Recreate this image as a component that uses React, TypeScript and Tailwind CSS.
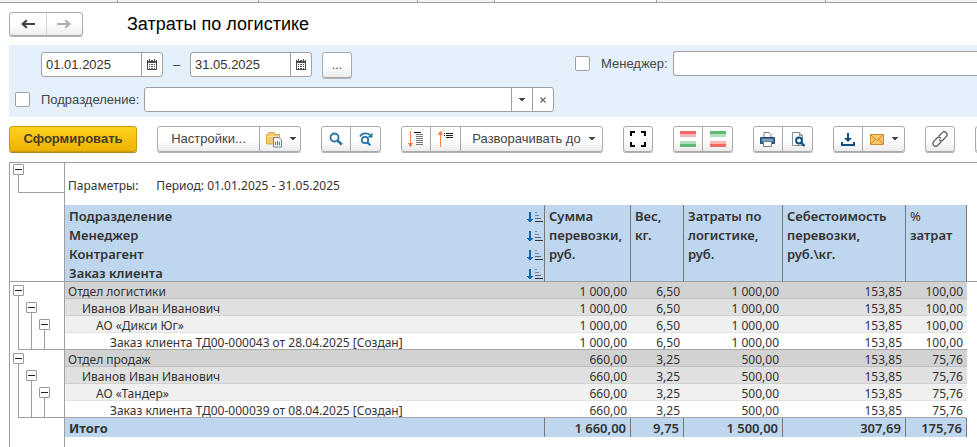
import React from "react";

const sans = "font-['Liberation_Sans',Arial,sans-serif]";
const face = "border border-[#a9a9a9] bg-linear-to-b from-white from-50% to-[#ececec] shadow-[0_1px_0_#b4b4b4]";

function Caret() {
  return (
    <svg width="6" height="4" viewBox="0 0 6 4" shapeRendering="crispEdges" className="shrink-0">
      <path d="M0 0h6v1H5v1H4v1H2V2H1V1H0z" fill="#444" />
    </svg>
  );
}

function CalendarIcon() {
  return (
    <svg width="10" height="11" viewBox="0 0 10 11" shapeRendering="crispEdges">
      <path d="M0 1h10v10H0z" fill="#4a4a4a" />
      <path d="M2 0h1v2H2zM7 0h1v2H7z" fill="#4a4a4a" />
      <path d="M1 1h1v1H1zM3 1h1v1H3zM6 1h1v1H6zM8 1h1v1H8zM1 4h8v6H1z" fill="#fff" />
      <path d="M2 5h1v1H2zM4 5h2v1H4zM7 5h1v1H7zM2 7h1v1H2zM4 7h2v1H4zM7 7h1v1H7zM2 9h1v1H2zM4 9h2v1H4zM7 9h1v1H7z" fill="#4a4a4a" />
    </svg>
  );
}

function NavArrow({ flip, color }: { flip?: boolean; color: string }) {
  return (
    <svg width="14" height="10" viewBox="0 0 14 10" className={flip ? "-scale-x-100" : ""}>
      <path d="M0 5 5 0.5 6.5 2 4.5 4H14v2H4.5l2 2L5 9.5z" fill={color} />
    </svg>
  );
}

function SortIcon() {
  return (
    <svg width="16" height="10" viewBox="0 0 16 10" shapeRendering="crispEdges">
      <path d="M2 0h2v7h2v1H5v1H4v1H2V9H1V8H0V7h2z" fill="#0b68b5" />
      <path d="M8 0h2v1H8zM8 3h4v1H8z" fill="#7a8794" />
      <path d="M8 6h6v1H8z" fill="#5b6670" />
      <path d="M8 9h8v1H8z" fill="#333" />
    </svg>
  );
}

function FolderIcon() {
  return (
    <svg width="18" height="17" viewBox="0 0 18 17">
      <path d="M1.500 13V3.500h1.500l1-2h5l1 2h4.500V13z" fill="#f3c870" stroke="#dba748" />
      <path d="M2 5.500h12" fill="none" stroke="#fbe3a8" />
      <path d="M8.500 6.500h5.500l2.500 2.500v7h-8z" fill="#fff" stroke="#66809a" />
      <path d="M10 11h1v3h-1z" fill="#35a04a" />
      <path d="M12 10h1v4h-1zM14 11h1v3h-1z" fill="#e33" />
    </svg>
  );
}

function SearchIcon() {
  return (
    <svg width="14" height="14" viewBox="0 0 14 14" fill="none" stroke="#2472a8">
      <circle cx="5.500" cy="5.500" r="4" strokeWidth="1.800" />
      <path d="m8.500 8.500 4.300 4" strokeWidth="2.400" />
    </svg>
  );
}

function SearchNextIcon() {
  return (
    <svg width="15" height="15" viewBox="0 0 15 15" fill="none" stroke="#2472a8">
      <circle cx="6" cy="8" r="3.200" strokeWidth="1.700" />
      <path d="m8.300 10.300 3 3" strokeWidth="2.200" />
      <path d="M1 4.500C3 0.800 8 0.500 11 3" strokeWidth="1.700" />
      <path d="M13.500 0.500v5h-5z" fill="#2472a8" stroke="none" />
    </svg>
  );
}

function ExpandIcon() {
  return (
    <svg width="16" height="16" viewBox="0 0 16 16" shapeRendering="crispEdges">
      <path d="M2 0h1v12h2v1H4v2H3v1H2v-1H1v-2H0v-1h2z" fill="#f58350" />
      <path d="M6 1.500h7" stroke="#111" />
      <path d="M8 3.500h7M8 5.500h7M8 7.500h7M8 9.500h7M8 11.500h7M8 13.500h7" stroke="#777" />
    </svg>
  );
}

function CollapseIcon() {
  return (
    <svg width="16" height="16" viewBox="0 0 16 16" shapeRendering="crispEdges">
      <path d="M2 16h1V4h2V3H4V1H3V0H2v1H1v2H0v1h2z" fill="#f58350" />
      <path d="M6 2.500h1M8 2.500h7M6 4.500h1M8 4.500h7M8 6.500h7" stroke="#222" />
    </svg>
  );
}

function FrameIcon() {
  return (
    <svg width="16" height="16" viewBox="0 0 16 16" fill="none" stroke="#000" strokeWidth="2" shapeRendering="crispEdges">
      <path d="M1 5V1h4M11 1h4v4M15 11v4h-4M5 15H1v-4" />
    </svg>
  );
}

function BandsIcon({ colors }: { colors: string[] }) {
  return (
    <svg width="16" height="16" viewBox="0 0 16 16" shapeRendering="crispEdges">
      <rect width="16" height="3" fill={colors[0]} />
      <rect y="3" width="16" height="3" fill={colors[1]} />
      <rect y="10" width="16" height="3" fill={colors[2]} />
      <rect y="13" width="16" height="3" fill={colors[3]} />
    </svg>
  );
}

function PrinterIcon() {
  return (
    <svg width="15" height="15" viewBox="0 0 15 15">
      <path d="M4 6V0.500h5L11 2.500V6" fill="#fff" stroke="#6b7f93" />
      <path d="M0.500 5.500h14v6H0.500z" fill="#3f6b99" stroke="#27496d" />
      <path d="M2 8h11" stroke="#c4d4e4" />
      <path d="M3.500 9.500h8v5h-8z" fill="#fff" stroke="#6b7f93" />
    </svg>
  );
}

function PreviewIcon() {
  return (
    <svg width="15" height="15" viewBox="0 0 15 15" fill="none">
      <path d="M1.500 13.500v-13h7l3 3v10z" fill="#fff" stroke="#7f8fa0" />
      <path d="M8.500 0.500v3h3" stroke="#7f8fa0" />
      <circle cx="8" cy="8.500" r="2.900" stroke="#0a4f80" strokeWidth="2" />
      <path d="m10 10.500 3.500 3.500" stroke="#0a4f80" strokeWidth="2.400" />
    </svg>
  );
}

function SaveIcon() {
  return (
    <svg width="14" height="13" viewBox="0 0 14 13">
      <path d="M6 0h2v5h3L7 9 3 5h3z" fill="#0a4f80" />
      <path d="M1 9v3h12V9" fill="none" stroke="#0a4f80" strokeWidth="2" />
    </svg>
  );
}

function MailIcon() {
  return (
    <svg width="14" height="11" viewBox="0 0 14 11" fill="none">
      <path d="M0.500 0.500h13v10H0.500z" fill="#f8c76c" stroke="#cf8a28" />
      <path d="m1 1 6 5.500L13 1M1 10l4.500-5M13 10 8.500 5" stroke="#cf8a28" />
    </svg>
  );
}

function LinkIcon() {
  return (
    <svg width="16" height="16" viewBox="0 0 16 16" fill="none" stroke="#555" strokeWidth="1.200" strokeLinecap="round">
      <path d="M7 5 10.300 1.700a2.600 2.600 0 0 1 3.900 3.900L11 9a2.500 2.500 0 0 1-3.500 0" />
      <path d="M9 11 5.700 14.300a2.600 2.600 0 0 1-3.900-3.900L5 7a2.500 2.500 0 0 1 3.500 0" />
    </svg>
  );
}

function Group({ children }: { children: React.ReactNode }) {
  return <div className={`flex h-[26px] shrink-0 divide-x divide-[#a9a9a9] rounded-[3px] ${face}`}>{children}</div>;
}

function Tool({ label, width = "w-[30px]", children }: { label: string; width?: string; children?: React.ReactNode }) {
  return (
    <button type="button" aria-label={label} className={`flex shrink-0 items-center justify-center first:-ml-px last:-mr-px ${width}`}>
      {children}
    </button>
  );
}

function Check({ id }: { id: string }) {
  return <input id={id} type="checkbox" className="size-[15px] shrink-0 appearance-none rounded-[2px] border border-[#a0a0a0] bg-white" />;
}

function DateField({ label, value }: { label: string; value: string }) {
  return (
    <div className="flex h-[25px] w-[122px] rounded-[3px] border border-[#a0a0a0] bg-white">
      <input aria-label={label} defaultValue={value} className="min-w-0 flex-1 pl-1 text-[13px] text-[#333] outline-none" />
      <button type="button" aria-label="Календарь" className="flex w-[21px] items-center justify-center border-l border-[#a0a0a0]">
        <CalendarIcon />
      </button>
    </div>
  );
}

function Toggle() {
  return (
    <button type="button" aria-label="Свернуть" className="flex size-[11px] shrink-0 items-center justify-center rounded-[1px] border border-[#999] bg-white">
      <span className="h-px w-[7px] bg-[#222]" />
    </button>
  );
}

/* One row of the grouping tree: a toggle at its own level, lines at the outer levels. */
function Branch({ level, last }: { level: number; last: boolean }) {
  return (
    <div className="flex h-[17px] flex-col">
      <div className="flex flex-1 pl-[2px]">
        {[0, 1, 2].map((n) => (
          <div key={n} className="flex w-[13px] flex-col items-center">
            {n === level && <div className="h-[3px]" />}
            {n === level && <Toggle />}
            {n <= level && <div className="w-px flex-1 bg-[#a0a0a0]" />}
          </div>
        ))}
      </div>
      {last && <div className="ml-[8px] h-px bg-[#a0a0a0]" />}
    </div>
  );
}

type Row = { level: number; name: string; values: string[] };
const first = ["1 000,00", "6,50", "1 000,00", "153,85", "100,00"];
const second = ["660,00", "3,25", "500,00", "153,85", "75,76"];
const rows: Row[] = [
  { level: 0, name: "Отдел логистики", values: first },
  { level: 1, name: "Иванов Иван Иванович", values: first },
  { level: 2, name: "АО «Дикси Юг»", values: first },
  { level: 3, name: "Заказ клиента ТД00-000043 от 28.04.2025 [Создан]", values: first },
  { level: 0, name: "Отдел продаж", values: second },
  { level: 1, name: "Иванов Иван Иванович", values: second },
  { level: 2, name: "АО «Тандер»", values: second },
  { level: 3, name: "Заказ клиента ТД00-000039 от 08.04.2025 [Создан]", values: second },
];
const totals = ["1 660,00", "9,75", "1 500,00", "307,69", "175,76"];
const shade = [
  "bg-[#d2d2d2] border-[#bebebe]",
  "bg-[#e0e0e0] border-[#d0d0d0]",
  "bg-[#f0f0f0] border-[#e2e2e2]",
  "bg-white border-[#a9a9a9]",
];
const indent = ["pl-[3px]", "pl-[17px]", "pl-[31px]", "pl-[45px]"];
const heads = [
  ["Сумма", "перевозки,", "руб."],
  ["Вес,", "кг."],
  ["Затраты по", "логистике,", "руб."],
  ["Себестоимость", "перевозки,", "руб.\\кг."],
  ["%", "затрат"],
];

export default function App() {
  return (
    <div className={`flex h-screen flex-col overflow-hidden bg-white text-[#444] ${sans}`}>
      <div className="flex h-[3px] shrink-0 divide-x divide-[#a0a0a0] border-b border-[#a0a0a0] bg-[#f2f2f2]">
        <div className="w-[118px]" />
        <div className="w-[141px]" />
        <div className="w-[159px]" />
        <div className="w-[77px]" />
        <div className="w-[162px] bg-white" />
        <div className="w-[169px]" />
        <div className="flex-1" />
      </div>

      <header className="flex h-[42px] shrink-0 items-center pl-[9px]">
        <div className={`flex h-6 w-[74px] divide-x divide-[#d5d5d5] rounded-[3px] ${face}`}>
          <button type="button" aria-label="Назад" className="flex flex-1 items-center justify-center">
            <NavArrow color="#444" />
          </button>
          <button type="button" aria-label="Вперед" className="flex flex-1 items-center justify-center">
            <NavArrow flip color="#b0b0b0" />
          </button>
        </div>
        <h1 className="ml-11 text-lg leading-6 text-black">Затраты по логистике</h1>
      </header>

      <section className="ml-[9px] grid h-[72px] shrink-0 grid-cols-[566px_1fr] content-start gap-y-[9px] bg-[#e4f0fc] pt-[6px] text-[13px]">
        <div className="flex h-[27px] items-center pl-8">
          <DateField label="Начало периода" value="01.01.2025" />
          <span className="w-[27px] text-center">–</span>
          <DateField label="Конец периода" value="31.05.2025" />
          <button type="button" className={`ml-[10px] h-[26px] w-[30px] rounded-[3px] text-xs leading-5 ${face}`}>...</button>
        </div>
        <div className="flex h-[25px] items-center">
          <Check id="manager-on" />
          <label htmlFor="manager-on" className="ml-[11px] w-[72px]">Менеджер:</label>
          <input aria-label="Менеджер" className="h-[25px] min-w-0 flex-1 rounded-l-[3px] border border-r-0 border-[#a0a0a0] bg-white px-1 outline-none" />
        </div>
        <div className="flex h-[25px] items-center pl-[6px]">
          <Check id="unit-on" />
          <label htmlFor="unit-on" className="ml-[11px] w-[103px]">Подразделение:</label>
          <div className="flex h-[25px] w-[410px] divide-x divide-[#a0a0a0] rounded-[3px] border border-[#a0a0a0] bg-white">
            <input aria-label="Подразделение" className="min-w-0 flex-1 px-1 outline-none" />
            <button type="button" aria-label="Выбрать" className="flex w-[21px] items-center justify-center">
              <Caret />
            </button>
            <button type="button" aria-label="Очистить" className="flex w-5 items-center justify-center">
              <svg width="6" height="6" viewBox="0 0 6 6" stroke="#666" strokeWidth="1.200">
                <path d="m0.500 0.500 5 5M5.500 0.500l-5 5" />
              </svg>
            </button>
          </div>
        </div>
      </section>

      <div className="mt-[9px] mb-[9px] flex shrink-0 gap-5 overflow-hidden pb-px pl-[9px] text-[13px]">
        <button type="button" className="h-[26px] w-32 shrink-0 rounded-[3px] border border-[#c99c0c] bg-linear-to-b from-[#ffd21f] to-[#edb200] font-bold text-[#443c28] shadow-[0_1px_0_#a98a2a]">
          Сформировать
        </button>
        <Group>
          <button type="button" className="w-[102px]">Настройки...</button>
          <button type="button" aria-label="Варианты отчета" className="flex w-10 items-center justify-center gap-[7px]">
            <FolderIcon />
            <Caret />
          </button>
        </Group>
        <Group>
          <Tool label="Найти"><SearchIcon /></Tool>
          <Tool label="Найти далее"><SearchNextIcon /></Tool>
        </Group>
        <Group>
          <Tool label="Развернуть группы"><ExpandIcon /></Tool>
          <Tool label="Свернуть группы"><CollapseIcon /></Tool>
          <button type="button" className="flex w-[141px] items-center justify-center gap-2 pl-1">
            Разворачивать до
            <Caret />
          </button>
        </Group>
        <Group>
          <Tool label="Во весь экран"><FrameIcon /></Tool>
        </Group>
        <Group>
          <Tool label="Убывание"><BandsIcon colors={["#f76467", "#fbb4b5", "#b4ddbd", "#5fba78"]} /></Tool>
          <Tool label="Возрастание"><BandsIcon colors={["#5fba78", "#b4ddbd", "#fbb4b5", "#f76467"]} /></Tool>
        </Group>
        <Group>
          <Tool label="Печать"><PrinterIcon /></Tool>
          <Tool label="Просмотр"><PreviewIcon /></Tool>
        </Group>
        <Group>
          <Tool label="Сохранить"><SaveIcon /></Tool>
          <button type="button" aria-label="Отправить" className="flex w-[41px] items-center justify-center gap-2">
            <MailIcon />
            <Caret />
          </button>
        </Group>
        <Group>
          <Tool label="Ссылка"><LinkIcon /></Tool>
        </Group>
        <Group>
          <Tool label="Еще" />
        </Group>
      </div>

      <main className="ml-[9px] flex min-h-0 flex-1 flex-col border-t border-l border-[#a0a0a0] font-['Noto_Sans','Open_Sans',sans-serif] text-xs text-[#333]">
        <div className="flex h-[42px] shrink-0">
          <div className="w-[55px] border-r border-[#a0a0a0] pt-px pl-[3px]">
            <Toggle />
            <div className="ml-[5px] h-[18px] border-b border-l border-[#a0a0a0]" />
          </div>
          <p className="flex gap-[18px] pt-[14px] pl-[3px] leading-[17px]">
            <span>Параметры:</span>
            <span>Период: 01.01.2025 - 31.05.2025</span>
          </p>
        </div>
        <table className="w-full shrink-0 table-fixed border-separate border-spacing-0">
          <colgroup>
            <col className="w-[55px]" />
            <col />
            <col className="w-[86px]" />
            <col className="w-[53px]" />
            <col className="w-[99px]" />
            <col className="w-[123px]" />
            <col className="w-[61px]" />
            <col className="w-[10px]" />
          </colgroup>
          <thead>
            <tr className="h-[77px] text-left align-top text-[13px] leading-[15px]">
              <td className="border-r border-b border-[#a0a0a0]" />
              <th className="border-r border-b border-r-[#777] border-b-[#a0a0a0] bg-[#bed6ee] pl-1 font-semibold">
                {["Подразделение", "Менеджер", "Контрагент", "Заказ клиента"].map((t) => (
                  <div key={t} className="flex items-center justify-between pt-1 pr-px">
                    {t}
                    <SortIcon />
                  </div>
                ))}
              </th>
              {heads.map((lines) => (
                <th key={lines[0]} className="border-r border-b border-r-[#777] border-b-[#a0a0a0] bg-[#bed6ee] pl-1 font-semibold whitespace-nowrap">
                  {lines.map((t) => (
                    <div key={t} className={t === "%" ? "pt-1 font-normal" : "pt-1"}>{t}</div>
                  ))}
                </th>
              ))}
              <td className="border-b border-[#a0a0a0]" />
            </tr>
          </thead>
          <tbody>
            {rows.map((r, i) => (
              <tr key={i} className="h-[17px] leading-3">
                <td className="border-r border-[#a0a0a0]">
                  <Branch level={r.level} last={r.level === 3} />
                </td>
                <td className={`border-b pt-1 whitespace-nowrap ${shade[r.level]} ${indent[r.level]}`}>{r.name}</td>
                {r.values.map((v, j) => (
                  <td key={j} className={`border-b pt-1 pr-1 text-right whitespace-nowrap ${shade[r.level]}`}>{v}</td>
                ))}
                <td />
              </tr>
            ))}
          </tbody>
          <tfoot>
            <tr className="h-[19px] text-[13px] leading-[17px] font-semibold">
              <td className="border-r border-[#a0a0a0]" />
              <th scope="row" className="border-r border-[#777] bg-[#bed6ee] pt-[2px] pl-1 text-left font-bold">Итого</th>
              {totals.map((v) => (
                <td key={v} className="border-r border-[#777] bg-[#bed6ee] pt-[2px] pr-1 text-right whitespace-nowrap">{v}</td>
              ))}
              <td />
            </tr>
          </tfoot>
        </table>
        <div className="w-[55px] flex-1 border-r border-[#a0a0a0]" />
      </main>
    </div>
  );
}
